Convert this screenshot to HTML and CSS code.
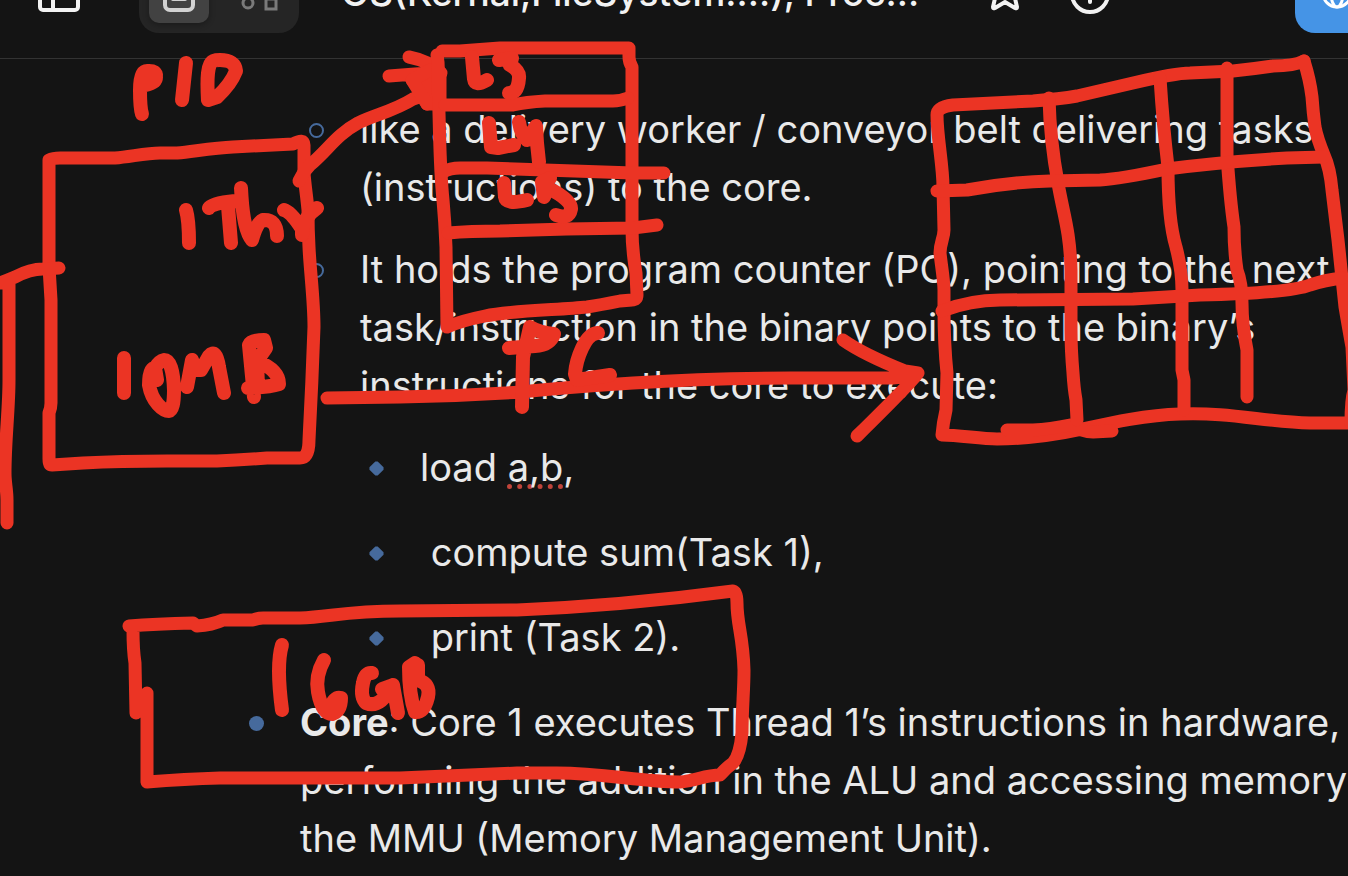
FILE: index.html
```html
<!DOCTYPE html>
<html lang="en">
<head>
<meta charset="utf-8">
<title>OS(Kernal,FileSystem....), Proc...</title>
<link rel="stylesheet" href="styles.css">
</head>
<body>
<header class="topbar">
  <button class="icon-button sidebar-toggle" aria-label="Toggle sidebar">
    <svg width="44" height="40" viewBox="0 0 44 40"><rect x="3" y="3" width="38" height="34" rx="3"/><path d="M16 3v34"/></svg>
  </button>
  <div class="mode-switch">
    <button class="mode mode-active" aria-label="Page mode">
      <svg width="36" height="40" viewBox="0 0 36 40"><rect x="4" y="3" width="28" height="34" rx="5"/><path d="M12 14h12M12 26h12"/></svg>
    </button>
    <button class="mode" aria-label="Edgeless mode">
      <svg width="40" height="40" viewBox="0 0 40 40"><circle cx="9" cy="30" r="5"/><rect x="27" y="26" width="10" height="10"/><path d="M14 5h12v10H14z"/></svg>
    </button>
  </div>
  <h1 class="title">OS(Kernal,FileSystem....), Proc...</h1>
  <div class="title-actions">
    <button class="icon-button" aria-label="Favorite">
      <svg width="44" height="44" viewBox="0 0 44 44"><path d="M22 2l5 11 12 2-8 8 3 13q0 2-2 1l-10-6-10 6q-2 1-2-1l3-13-8-8 12-2z"/></svg>
    </button>
    <button class="icon-button" aria-label="Info">
      <svg width="44" height="44" viewBox="0 0 44 44"><circle cx="22" cy="23" r="18"/><path d="M22 20v11"/></svg>
    </button>
  </div>
  <button class="share" aria-label="Share">
    <svg width="36" height="36" viewBox="0 0 36 36"><circle cx="18" cy="18" r="14"/><ellipse cx="18" cy="18" rx="6" ry="14"/><path d="M4 18h28"/></svg>
  </button>
</header>
<main class="page">
  <ul class="list">
    <li class="group">
      <ul class="list sub">
        <li class="item ring">like a delivery worker / conveyor belt delivering tasks (instructions) to the core.</li>
        <li class="item ring">It holds the program counter (PC), pointing to the next task/instruction in the binary points to the binary’s instructions for the core to execute:
          <ul class="list steps">
            <li class="item diamond">load <span class="misspelled">a,b</span>,</li>
            <li class="item diamond">&nbsp;compute sum(Task 1),</li>
            <li class="item diamond">&nbsp;print (Task 2).</li>
          </ul>
        </li>
      </ul>
    </li>
    <li class="item dot"><strong>Core</strong>: Core 1 executes Thread 1’s instructions in hardware, performing the addition in the ALU and accessing memory via the MMU (Memory Management Unit).</li>
  </ul>
</main>
<svg class="ink" width="1348" height="876" viewBox="0 0 1348 876" role="img" aria-label="Red pen sketch of a process, its thread stack and memory">
  <!-- process box -->
  <path d="M49 160Q53 158 60 158L115 158C130 157 145 153 160 153L177 153C196 151 214 148 233 147L293 144Q304 138 304 145L304 173C305 186 307 198 308 210Q308 229 309 247C310 270 314 300 314 327Q312 384 309 440Q309 458 300 458L267 458Q240 460 217 461L167 461Q120 461 83 463L52 465Q49 465 49 459L49 413Q51 408 51 403L51 300Q50 283 49 267Z"/>
  <path d="M0 283Q8 280 15 277Q30 269 43 269L59 268M-3 283L9 283 9 380C9 410 5 440 5 473C5 483 7 490 7 500L7 523"/>
  <!-- thread arrow -->
  <path d="M299 181L304 172 310 165C328 150 336 135 358 123C374 115 394 111 413 99L430 93M409 57Q430 61 441 73M389 76L415 74 430 73M412 80L424 92 427 104"/>
  <path class="solid" d="M412 80L430 70 440 75 440 104 427 104Z"/>
  <!-- stack -->
  <path d="M437 55Q439 66 438 77L439 113C440 150 440 170 443 200Q445 222 446 247L447 327C456 323 470 319 485 316C515 310 560 310 587 307Q600 305 620 301L632 300Q637 300 637 295L636 273Q632 250 632 228L632 67Q629 62 629 57L629 48 500 48 460 51 442 51"/>
  <path d="M445 105L513 105Q526 102 545 101L613 101Q620 101 628 98M443 172Q450 168 460 168L487 168 633 173 664 173M448 233Q470 231 500 231L567 229 633 228 657 225"/>
  <!-- PC arrow -->
  <path d="M327 398L400 397Q460 396 520 392Q570 387 633 383Q710 378 790 378L893 378Q908 377 918 373M843 340C860 352 880 361 905 371L918 373Q912 382 857 436"/>
  <!-- memory grid -->
  <path d="M1304 61Q1294 66 1273 66Q1253 69 1233 71L1190 73C1178 73 1150 79 1133 83L1077 96Q1060 99 1033 101L953 105Q937 107 937 115C937 137 943 165 943 187L944 230C944 238 940 243 940 253C941 263 944 280 944 290L944 307Q944 345 947 373L946 410Q943 423 942 435C960 435 980 439 997 439C1030 439 1060 434 1083 429C1110 423 1145 415 1180 414C1230 412 1265 422 1310 423L1348 423"/>
  <path d="M1304 61Q1310 80 1312 97Q1313 112 1315 127Q1317 138 1324 155Q1330 168 1332 190L1338 240 1345 307Q1348 325 1352 347L1354 390Q1351 400 1351 423"/>
  <path d="M1007 430L1033 430Q1050 429 1070 425Q1082 432 1093 432L1112 431"/>
  <path d="M1049 98Q1050 140 1058 183C1063 213 1070 230 1071 270L1071 330Q1071 350 1073 373Q1074 389 1076 400L1077 420M1160 78Q1163 125 1168 167Q1168 220 1176 247Q1182 270 1182 290L1182 370 1184 380 1184 410M1227 68L1227 155Q1230 200 1234 227Q1234 250 1237 270Q1242 283 1242 303Q1242 325 1247 350L1247 397"/>
  <path d="M937 191L967 190Q1010 182 1050 181L1100 180Q1120 179 1167 169Q1220 162 1287 158L1324 157M942 311Q970 300 1000 300L1133 299 1200 295Q1290 293 1310 285Q1325 280 1342 278"/>
  <!-- RAM box -->
  <path d="M129 626Q155 624 193 623L197 626Q212 625 223 620L253 620Q258 618 263 618L300 618C330 617 345 611 400 611L517 610C590 607 650 602 733 591Q737 592 737 603C737 625 743 635 744 670C744 690 742 710 742 733Q740 755 733 763Q726 768 720 775C705 775 695 781 680 782C640 782 605 773 557 773L517 773 400 778 220 778Q185 779 147 782L147 693M133 630Q133 650 135 663L136 713"/>
  <!-- lettering -->
  <g class="lettering">
    <path d="M142 114Q140 108 140 90Q140 71 147 71Q157 70 156 77Q156 83 145 85M186 63L182 100M208 100Q206 65 212 62Q213 60 220 60Q235 60 236 71Q231 84 217 97Z"/>
    <path d="M186 210Q189 220 189 243M209 208Q212 203 235 201M228 206L231 243M241 188Q243 230 252 240Q257 222 263 220Q277 219 277 236M284 210Q291 212 302 229L302 235Q303 217 317 208"/>
    <path d="M124 358V393M157 380L155 368Q149 368 149 385C152 402 163 411 169 411Q174 410 174 390Q173 360 164 360Q159 361 155 368M187 387L192 360 196 370 201 370 209 356Q216 348 219 367L224 393M254 397L249 345Q251 340 264 340L266 348 257 361Q279 370 279 384Q270 387 248 388M257 361L258 386"/>
    <path d="M472 57L474 79Q475 87 487 80M499 60L512 58 510 65Q520 71 519 78Q518 93 509 93"/>
    <path d="M489 123L491 147 498 148 514 145M519 122Q521 135 527 140L536 126 537 143 539 162"/>
    <path d="M504 183L505 197Q506 205 527 200M550 178L542 182 544 197 548 188Q572 200 571 209Q569 220 556 215"/>
    <path d="M530 327Q526 345 523 357L522 407M530 327Q540 333 554 334Q550 345 535 346L509 348M598 333C585 333 576 360 575 374L577 380 610 375"/>
    <path d="M282 645Q276 665 282 710M324 660Q315 676 318 692Q322 714 332 714Q341 711 341 698Q334 696 329 710M372 673Q365 672 363 683Q360 697 366 703Q380 709 393 685L382 689M393 685L398 713M415 663L409 667Q409 695 415 712Q424 713 428 697Q431 684 418 680L418 665"/>
  </g>
</svg>
</body>
</html>
```
FILE: styles.css
```css
*,
*::before { box-sizing: border-box; }

body {
  margin: 0;
  min-height: 100vh;
  overflow: hidden;
  background: #141414;
  color: #e9e9e9;
  font-family: Inter, "Liberation Sans", sans-serif;
}

button {
  border: 0;
  padding: 0;
  background: none;
  color: inherit;
  display: flex;
  align-items: center;
  justify-content: center;
}

button svg {
  fill: none;
  stroke: currentColor;
  stroke-width: 4;
  stroke-linejoin: round;
  stroke-linecap: round;
}

.topbar {
  display: flex;
  align-items: center;
  height: 132px;
  margin-top: -73px;
  border-bottom: 1px solid #333;
  padding-left: 37px;
  color: #f2f2f2;
}

.icon-button { flex: none; }

.sidebar-toggle { margin-right: 58px; }

.mode-switch {
  flex: none;
  display: flex;
  gap: 20px;
  padding: 10px;
  border-radius: 20px;
  background: #252525;
}

.mode {
  width: 60px;
  height: 60px;
  border-radius: 10px;
  color: #7a7a7a;
}

.mode svg { stroke-width: 3; stroke-linejoin: miter; }

.mode-active {
  background: #424242;
  color: #d2d2d2;
  box-shadow: 0 2px 6px rgba(0, 0, 0, 0.3);
}

.mode-active svg { stroke-width: 4; }

.title {
  flex: none;
  margin: 0 0 0 42px;
  font-size: 37px;
  font-weight: 500;
  line-height: 44px;
  white-space: nowrap;
}

.title-actions {
  flex: none;
  display: flex;
  gap: 41px;
  margin-left: 64px;
}

.share {
  flex: none;
  width: 240px;
  height: 80px;
  margin-left: auto;
  margin-right: -187px;
  padding-left: 24px;
  justify-content: flex-start;
  border-radius: 20px;
  background: #4594e6;
  color: #fff;
}

.share svg { stroke-width: 3; }

.page {
  margin-right: -90px;
  padding: 41px 0 0 240px;
  font-size: 38px;
  line-height: 58px;
}

.list {
  display: flex;
  flex-direction: column;
  gap: 27px;
  margin: 0;
  padding: 0 0 0 60px;
  list-style: none;
}

.sub { gap: 24px; }

.steps { padding-top: 24px; }

.item { position: relative; }

.item::before {
  content: "";
  position: absolute;
  left: -51px;
  top: 23px;
  width: 15px;
  height: 15px;
}

.dot::before {
  border-radius: 50%;
  background: #466a9c;
}

.ring::before {
  border: 2px solid #466a9c;
  border-radius: 50%;
}

.diamond::before {
  background: #466a9c;
  clip-path: polygon(42% 3%, 58% 3%, 97% 42%, 97% 58%, 58% 97%, 42% 97%, 3% 58%, 3% 42%);
}

.misspelled {
  text-decoration: underline dotted #c0443a 5px;
  text-underline-offset: 3px;
  text-decoration-skip-ink: none;
}

.ink {
  position: absolute;
  left: 0;
  top: 0;
  pointer-events: none;
  fill: none;
  stroke: #eb3424;
  stroke-width: 13;
  stroke-linecap: round;
  stroke-linejoin: round;
}

.lettering { stroke-width: 14; }

.solid { fill: #eb3424; }
```
